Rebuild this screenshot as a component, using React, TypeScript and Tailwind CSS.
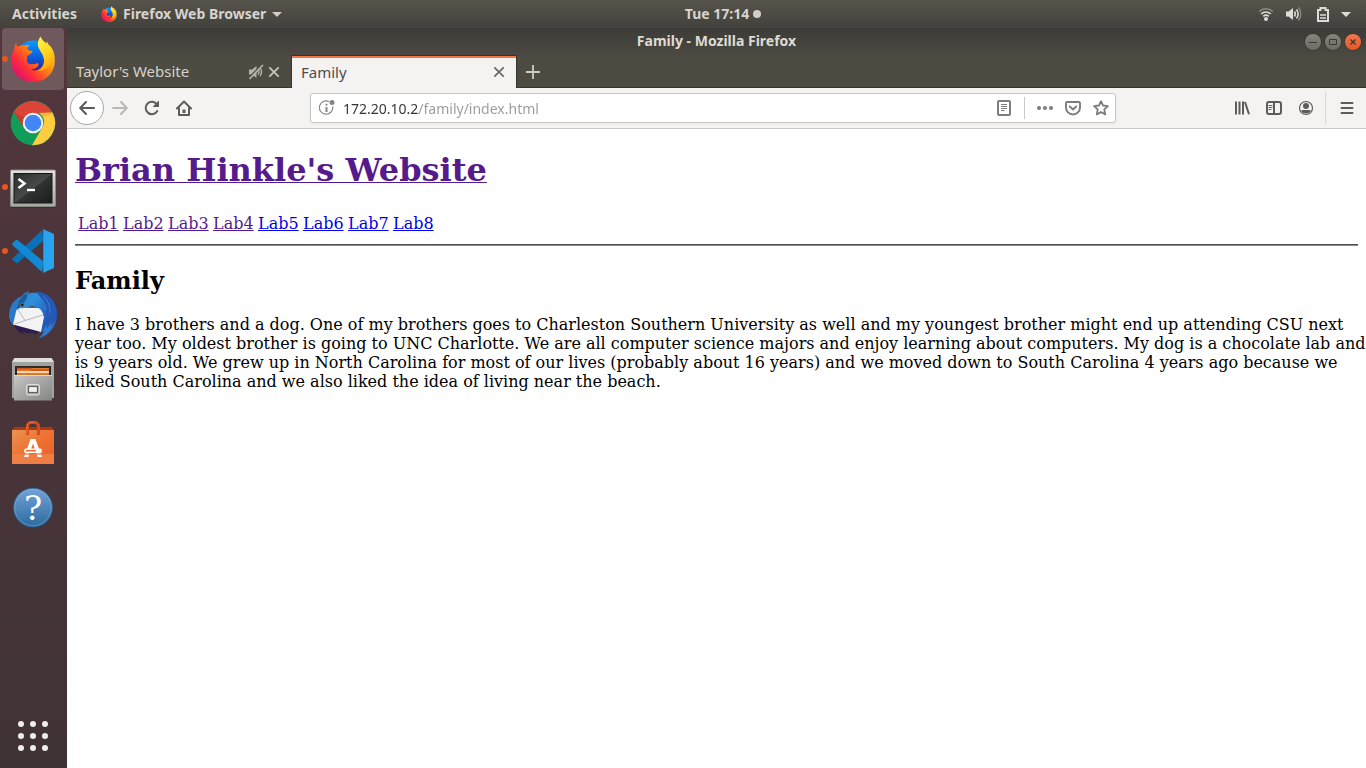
import type { ReactNode } from "react";

function FirefoxIcon({ className, id }: { className: string; id: string }) {
  return (
    <svg className={className} viewBox="0 0 46 46" aria-hidden="true">
      <defs>
        <linearGradient id={`${id}-body`} x1="0.1" y1="0.9" x2="0.95" y2="0.2">
          <stop offset="0" stopColor="#d3107a" />
          <stop offset="0.3" stopColor="#ff2b3d" />
          <stop offset="0.6" stopColor="#ff7a12" />
          <stop offset="1" stopColor="#ffd322" />
        </linearGradient>
        <linearGradient id={`${id}-globe`} x1="0.5" y1="0" x2="0.5" y2="1">
          <stop offset="0" stopColor="#0a9bff" />
          <stop offset="0.5" stopColor="#0a5fe0" />
          <stop offset="1" stopColor="#3b1780" />
        </linearGradient>
        <linearGradient id={`${id}-flame`} x1="0.3" y1="0" x2="0.7" y2="1">
          <stop offset="0" stopColor="#fff24a" />
          <stop offset="0.5" stopColor="#ffd21c" />
          <stop offset="1" stopColor="#ff9a0c" />
        </linearGradient>
      </defs>
      <circle cx="23" cy="21" r="16.500" fill={`url(#${id}-globe)`} />
      <path
        d="M6.300 6.500C6.100 8.500 7 10 7.500 11c2-1.600 4.500-2 6.500-1.500 2.500-.8 4.500-.6 6.200-.2-2.200 1-3 2.400-2.900 3.900 1.300 1.300 4.500 1.500 5.200 2.500-.5 2-3.800 2.600-5.600 4.800.2 1.500.4 3.200-.2 4.300 1.200 4 4.500 3.500 7.300 3.300 2.500-.4 4-1.700 4.600-.2-.4 3-3.600 5.300-7.600 5.300 4 3.200 11.500-.3 13.400-6.900C36 20.500 34.500 12 31 7c8 1.500 13.800 8.500 13.800 18C44.800 37 35.500 46 23.200 46 10.500 46 1 37 1 25c0-4.500 1.200-8.500 3.300-12 .1-2.500.8-5 2-6.500z"
        fill={`url(#${id}-body)`}
      />
      <path
        d="M30.500 0.500C27.500 5 27 9 29.200 13c2.200 4 5.300 7.300 4.800 13-.3 4-2.600 7-5.500 9C38 34 43 28 44.600 20.500 44 15 42 11 38.500 8.500L37 5.300l-.5 2.200C34 5.500 31.600 3.500 30.500.5z"
        fill={`url(#${id}-flame)`}
      />
    </svg>
  );
}

function ChromeIcon() {
  return (
    <svg className="size-[46px]" viewBox="0 0 46 46" aria-hidden="true">
      <circle cx="23" cy="23" r="22.300" fill="#109d58" />
      <path d="M3.700 11.900A22.300 22.300 0 0 1 42.300 13H23a10.200 10.200 0 0 0-9.200 14.500z" fill="#db4437" />
      <path d="M42.400 12.500A22.300 22.300 0 0 1 22 45.300l9.900-17A10.300 10.300 0 0 0 29 13z" fill="#ffcd40" />
      <path d="M14 17.500 12.500 26 3.700 11.900z" fill="#a8392f" opacity=".5" />
      <path d="m29 13 13.400-.5.7 1.500-11 3z" fill="#d9a52c" opacity=".45" />
      <circle cx="23" cy="23" r="10.300" fill="#f4f4f4" />
      <circle cx="23" cy="23" r="8.300" fill="#4285f4" />
    </svg>
  );
}

function TerminalIcon() {
  return (
    <svg className="mt-1 h-[40px] w-[46px]" viewBox="0 0 46 40" aria-hidden="true">
      <defs>
        <linearGradient id="term-frame" x2="0" y2="1">
          <stop offset="0" stopColor="#e4e4e2" />
          <stop offset="1" stopColor="#a5a5a2" />
        </linearGradient>
        <linearGradient id="term-screen" x2="1" y2="1">
          <stop offset="0" stopColor="#2c302d" />
          <stop offset="0.500" stopColor="#474a48" />
          <stop offset="0.520" stopColor="#303332" />
          <stop offset="1" stopColor="#1b1d1c" />
        </linearGradient>
      </defs>
      <rect x="0.500" y="2" width="45" height="37" rx="1" fill="#2b1f22" opacity=".5" />
      <rect x="0.500" y="1" width="45" height="36.500" rx="1" fill="url(#term-frame)" stroke="#898986" />
      <rect x="4" y="4.500" width="38" height="29.500" fill="url(#term-screen)" stroke="#151716" />
      <path d="m8.500 10 6 4.500-6 4.500" fill="none" stroke="#fff" strokeWidth="2.500" />
      <path d="M17 21h8" stroke="#fff" strokeWidth="2.300" />
    </svg>
  );
}

function CodeIcon() {
  return (
    <svg className="size-[44px]" viewBox="0 0 44 44" aria-hidden="true">
      <path d="M1.500 29.500 31 1l1.500 10.500L7 33.800c-.8.600-1.500.500-2.200 0l-3.200-2.700c-.500-.500-.600-1.100-.100-1.600z" fill="#0a70b8" />
      <path d="m1.500 14.200 3.200-2.900c.7-.6 1.400-.6 2.200 0L32.500 32.500 31 43 1.500 16c-.5-.6-.5-1.200 0-1.800z" fill="#1289d3" />
      <path d="M31 1c.6-.6 1.200-.7 2-.4L41.800 4.500c.8.400 1.200.9 1.200 1.800v31.400c0 .9-.4 1.400-1.200 1.800L33 43.400c-.8.300-1.400.2-2-.4.800.4 1.500 0 1.500-1V2c0-1-.7-1.400-1.500-1z" fill="#2aa5ee" />
      <path d="M32.500 1v42l9.600-4c.6-.3.900-.7.900-1.400V6.400c0-.7-.3-1.100-.9-1.400z" fill="#28a3ed" />
    </svg>
  );
}

function MailIcon() {
  return (
    <svg className="size-[48px]" viewBox="0 0 48 48" aria-hidden="true">
      <defs>
        <linearGradient id="mail-wing" x1="0" y1="0" x2="1" y2="0.800">
          <stop offset="0" stopColor="#2c84c8" />
          <stop offset="0.450" stopColor="#2f8fdc" />
          <stop offset="1" stopColor="#2054b4" />
        </linearGradient>
      </defs>
      <path d="M27 .8C39 1 48 11 48 23.500c0 12-7 20.500-18 23.500 3-2 4.500-4 5-7L22 34z" fill="#2358b8" />
      <path d="M4 31.500 31 40l-4 3-5-1.500-4 1-4-3 1 3.500C9 41 6 37 4 31.500z" fill="#2b1d4d" />
      <path d="M13 5C5 8 0 15 0 24.500c0 4 1.500 7 4.500 9.500L9 19z" fill="#2a78c8" />
      <path d="m8 16.500 25 .5 2 9-3 15L4 33.500z" fill="#f3f3f3" />
      <path d="m8 17 8 12.500L34 24M16 29.500 5.500 33" fill="none" stroke="#b4b7bc" />
      <path d="M20.500 0 18 3C25 0 35 2 39 9c4 6 4 14 0 22l-4 3c1-6 0-11-3-15-3-3.500-7-4.500-11-3.500-3.500.8-6.500 2.200-9.500 1.500L7 19c1-2 1.500-4.500 2.500-7C11.500 6 15 1.500 20.500 0z" fill="url(#mail-wing)" />
      <path d="M9.500 12c1.500-4.500 4-8 8.500-9.500 1 3-.5 6-2.500 8.500-2.500 3-4.500 5-8.500 8 1-2 1.500-4.500 2.500-7z" fill="#1b5c9a" />
      <path d="M27 1c13 0 21 10 21 22.500l-1.500 6.500-.5-4-2 7-.5-4-3 7-.5-4-6 6c3-8 4.500-15 2-22C33.500 9 31 5 27 1z" fill="#2358b4" />
      <path d="M46.500 29C44 39 38 45 29 47.500c3-2 5-4.500 6-8l-5 3c5-4 6-6 7.500-9l.5 4 4-6 .5 4z" fill="#3478c8" />
      <path d="M29 5c5 3 7.500 8 8 14M34 5c5 4 7 9 7 17" fill="none" stroke="#43a0e4" strokeWidth="1" opacity=".6" />
      <circle cx="13.300" cy="14" r="1.800" fill="#15233a" stroke="#8d7450" strokeWidth=".8" />
    </svg>
  );
}

function FilesIcon() {
  return (
    <svg className="mt-0.5 h-[46px] w-[44px]" viewBox="0 0 44 46" aria-hidden="true">
      <defs>
        <linearGradient id="drawer" x2="1" y2="1">
          <stop offset="0" stopColor="#c6c6c4" />
          <stop offset="1" stopColor="#858583" />
        </linearGradient>
      </defs>
      <path d="M3.500 1h37L43 5v36H1V5z" fill="#a2a2a0" />
      <path d="M3.500 1h37L43 5H1z" fill="#dededc" />
      <path d="M4 9h36v9H4z" fill="#2b2826" />
      <path d="M6 11h32v8H6z" fill="#d97a28" />
      <path d="M6 11.500h13l2 1.500h17" fill="none" stroke="#d0501c" strokeWidth="1.500" />
      <path d="M6 15h32" stroke="#fff3df" strokeWidth="1.500" />
      <path d="M3 18h38v25.500H3z" fill="url(#drawer)" />
      <path d="M3 18.500h38" stroke="#deded9" />
      <rect x="15.500" y="27.500" width="13" height="10.500" rx="1.500" fill="#b4b4b2" stroke="#dededc" />
      <rect x="17.500" y="29.500" width="9" height="6" fill="#f1f1ef" stroke="#60605e" strokeWidth="1.200" />
    </svg>
  );
}

function SoftwareIcon() {
  return (
    <svg className="h-[44px] w-[42px]" viewBox="0 0 42 44" aria-hidden="true">
      <defs>
        <linearGradient id="bag" x2="1" y2="1">
          <stop offset="0" stopColor="#e99350" />
          <stop offset="0.500" stopColor="#ee7133" />
          <stop offset="1" stopColor="#e96028" />
        </linearGradient>
      </defs>
      <path d="M2 6h38l2 3.500H0z" fill="#ab3814" />
      <path d="M0 9h42v34H0z" fill="url(#bag)" />
      <path d="M0 33h42v10H0z" fill="#f0834b" opacity=".8" />
      <path d="M15.500 14V5.500a4 4 0 0 1 4-4h3a4 4 0 0 1 4 4V14" fill="none" stroke="#d64a1c" strokeWidth="3.200" />
      <path d="M15 13V5.500A4.500 4.500 0 0 1 19.500 1h3" fill="none" stroke="#ec7043" />
      <path d="M18.600 18h4.800l6.600 18h-4.300L21 22.500 16.300 36H12z" fill="#fff" />
      <path d="M10 33h22" stroke="#ee7133" strokeWidth="1.200" />
      <rect x="12" y="27.500" width="18" height="4.500" rx="2" fill="#fff" />
      <path d="M14 29.700h10" stroke="#ee6a2c" strokeWidth="1.500" />
    </svg>
  );
}

function HelpIcon() {
  return (
    <svg className="mt-0.5 size-[42px]" viewBox="0 0 42 42" aria-hidden="true">
      <defs>
        <linearGradient id="help-disc" x2="0" y2="1">
          <stop offset="0" stopColor="#75a2d9" />
          <stop offset="1" stopColor="#2c6b9d" />
        </linearGradient>
      </defs>
      <circle cx="21" cy="21.500" r="20" fill="#26485f" opacity=".6" />
      <circle cx="21" cy="20.500" r="19.300" fill="url(#help-disc)" stroke="#2c649a" />
      <circle cx="21" cy="20.500" r="18.300" fill="none" stroke="#8cb7e3" opacity=".5" />
      <text x="21" y="33" textAnchor="middle" className="fill-white font-['DejaVu_Serif'] text-[34px]">?</text>
    </svg>
  );
}

function DockItem({ label, active, running, children }: { label: string; active?: boolean; running?: boolean; children: ReactNode }) {
  return (
    <button
      type="button"
      aria-label={label}
      className={`relative flex size-[62px] items-center justify-center rounded ${active ? "bg-[#6f595d]" : ""}`}
    >
      {running && <span className="absolute top-[28px] left-0 size-[6px] rounded-full bg-[#e95420]" />}
      {children}
    </button>
  );
}

function Dock() {
  return (
    <nav aria-label="Dock" className="flex w-[67px] shrink-0 flex-col gap-0.5 bg-linear-to-b from-[#52373d] to-[#3f3235] pl-0.5">
      <DockItem label="Firefox Web Browser" active running>
        <FirefoxIcon id="dock-ff" className="size-[46px]" />
      </DockItem>
      <DockItem label="Google Chrome"><ChromeIcon /></DockItem>
      <DockItem label="Terminal" running><TerminalIcon /></DockItem>
      <DockItem label="Visual Studio Code" running><CodeIcon /></DockItem>
      <DockItem label="Thunderbird Mail"><MailIcon /></DockItem>
      <DockItem label="Files"><FilesIcon /></DockItem>
      <DockItem label="Ubuntu Software"><SoftwareIcon /></DockItem>
      <DockItem label="Help"><HelpIcon /></DockItem>
      <button type="button" aria-label="Show Applications" className="mt-auto mb-px flex size-[62px] items-center justify-center">
        <span className="grid grid-cols-3 gap-1.5">
          {[0, 1, 2, 3, 4, 5, 6, 7, 8].map((n) => (
            <span key={n} className="size-1.5 rounded-full bg-[#eeeeec]" />
          ))}
        </span>
      </button>
    </nav>
  );
}

function SystemBar() {
  return (
    <header className="flex h-7 shrink-0 items-center bg-linear-to-b from-[#57544b] to-[#42413c] text-sm font-bold text-[#d6d4ce]">
      <div className="flex flex-1 items-center pl-3">
        <button type="button">Activities</button>
        <button type="button" className="ml-6 flex items-center">
          <FirefoxIcon id="bar-ff" className="mr-1.5 size-4" />
          Firefox Web Browser
          <svg className="ml-1.5 h-[5px] w-[10px]" viewBox="0 0 10 5" aria-hidden="true">
            <path d="M0 0h10L5 5z" fill="#d0cec8" />
          </svg>
        </button>
      </div>
      <button type="button" className="flex items-center gap-1 pl-17">
        Tue 17:14
        <span className="size-2 rounded-full bg-[#d0cec8]" />
      </button>
      <div className="flex flex-1 justify-end">
        <button type="button" aria-label="System menu" className="flex items-center pr-[15px]">
          <svg className="h-4 w-4" viewBox="0 0 16 16" fill="none" stroke="#dedcd8" strokeWidth="1.600" aria-hidden="true">
            <path d="M1.200 5.600a9.500 9.500 0 0 1 13.600 0" opacity=".4" />
            <path d="M3.200 8a6.800 6.800 0 0 1 9.600 0M5.300 10.300a4 4 0 0 1 5.400 0" />
            <circle cx="8" cy="13" r="2" fill="#dedcd8" stroke="none" />
          </svg>
          <svg className="ml-3 h-4 w-4" viewBox="0 0 16 16" fill="none" stroke="#dedcd8" strokeWidth="1.500" aria-hidden="true">
            <path d="M0 5.500h2.500L7 2v12l-4.500-3.500H0z" fill="#dedcd8" stroke="none" />
            <path d="M8.500 5.500a4.500 4.500 0 0 1 0 5M10.500 3.500a7.500 7.500 0 0 1 0 9" />
            <path d="M12.500 1.500a10.500 10.500 0 0 1 0 13" opacity=".4" />
          </svg>
          <svg className="ml-[13px] h-4 w-4" viewBox="0 0 16 16" fill="none" stroke="#dedcd8" strokeWidth="2" aria-hidden="true">
            <path d="M3 15V4h2.500V2h5v2H13v11z" />
            <path d="M5 9h6M5 12h6" strokeWidth="1.500" />
          </svg>
          <svg className="ml-[10px] h-[5px] w-[10px]" viewBox="0 0 10 5" aria-hidden="true">
            <path d="M0 0h10L5 5z" fill="#dedcd8" />
          </svg>
        </button>
      </div>
    </header>
  );
}

function WindowButton({ label, close, children }: { label: string; close?: boolean; children: ReactNode }) {
  return (
    <button
      type="button"
      aria-label={label}
      className={`flex size-4 items-center justify-center rounded-full shadow-[0_0_0_1px_#3a3934] ${
        close ? "bg-linear-to-b from-[#f2774f] to-[#e6561f]" : "bg-linear-to-b from-[#86847c] to-[#6d6b64]"
      }`}
    >
      <svg className="size-4" viewBox="0 0 16 16" fill="none" stroke="#3a3934" aria-hidden="true">{children}</svg>
    </button>
  );
}

function TitleBar() {
  return (
    <div className="grid h-7 grid-cols-[1fr_auto_1fr] items-center bg-linear-to-b from-[#3c3b37] to-[#4b4942]">
      <span />
      <h1 className="pb-0.5 text-sm leading-5 font-bold text-[#dfdbd2]">Family - Mozilla Firefox</h1>
      <div className="flex justify-end gap-1 pr-[5px]">
        <WindowButton label="Minimize"><path d="M4 8.500h8" /></WindowButton>
        <WindowButton label="Maximize"><path d="M4.500 5.500h7v5h-7z" /></WindowButton>
        <WindowButton label="Close" close><path d="m5.500 5.500 5 5m0-5-5 5" strokeWidth="1.400" /></WindowButton>
      </div>
    </div>
  );
}

function CloseGlyph() {
  return (
    <svg className="size-3" viewBox="0 0 12 12" fill="none" stroke="currentColor" strokeWidth="1.700" aria-hidden="true">
      <path d="m1.300 1.300 9.400 9.400m0-9.400-9.400 9.400" />
    </svg>
  );
}

function TabStrip() {
  return (
    <div role="tablist" className="flex h-8 bg-[#4e4b43] text-[15px]">
      <div className="flex w-[224px] items-center border-b border-[#353430] pr-[11px] pl-[9px] text-[#d6d3cb]">
        <button type="button" role="tab" aria-selected="false" className="flex-1 text-left">Taylor's Website</button>
        <button type="button" aria-label="Unmute tab" className="mr-1">
          <svg className="size-4" viewBox="0 0 16 16" fill="none" stroke="#b5b2a9" strokeWidth="1.400" aria-hidden="true">
            <path d="M1 5.500h3L8.500 2v12L4 10.500H1z" fill="#b5b2a9" stroke="none" />
            <path d="M10 5.500a4 4 0 0 1 0 5M12 4a6.500 6.500 0 0 1 0 8" />
            <path d="M14 .5.500 14" stroke="#4e4b43" strokeWidth="1.500" />
            <path d="M15 1 1.500 15" strokeWidth="1.700" />
          </svg>
        </button>
        <button type="button" aria-label="Close tab" className="text-[#c9c6be]"><CloseGlyph /></button>
      </div>
      <div className="-mt-px flex w-[226px] items-center border-x border-t border-[#353430] bg-[#f4f3f2] pr-[11px] pl-[9px] text-[#4c4c4c] shadow-[inset_0_2px_0_#f07746]">
        <button type="button" role="tab" aria-selected="true" className="flex-1 text-left">Family</button>
        <button type="button" aria-label="Close tab" className="text-[#686868]"><CloseGlyph /></button>
      </div>
      <div className="flex flex-1 items-center border-b border-[#353430] pl-2">
        <button type="button" aria-label="New tab">
          <svg className="size-4" viewBox="0 0 16 16" stroke="#d0cdc5" strokeWidth="1.800" aria-hidden="true">
            <path d="M8 1v14M1 8h14" />
          </svg>
        </button>
      </div>
    </div>
  );
}

function ToolButton({ label, className = "text-[#5c5c5c]", children }: { label: string; className?: string; children: ReactNode }) {
  return (
    <button type="button" aria-label={label} className={`flex h-8 w-8 shrink-0 items-center justify-center ${className}`}>
      <svg className="size-4" viewBox="0 0 16 16" fill="none" stroke="currentColor" strokeWidth="2" strokeLinecap="round" strokeLinejoin="round" aria-hidden="true">
        {children}
      </svg>
    </button>
  );
}

function AddressBar() {
  return (
    <div className="mx-[110px] flex h-[30px] flex-1 items-center rounded-[3px] border border-[#c8c7c5] bg-white pl-2 text-sm shadow-[0_1px_3px_rgba(0,0,0,0.05)]">
      <button type="button" aria-label="Site information">
        <svg className="size-4" viewBox="0 0 16 16" fill="none" stroke="#858585" strokeWidth="1.200" aria-hidden="true">
          <path d="M10 1.500A6.700 6.700 0 1 0 13.700 6.500" />
          <path d="M7.500 7v5" strokeWidth="2" />
          <path d="M7.500 3.800v1.700" strokeWidth="2" />
          <circle cx="13" cy="2.600" r="2.500" fill="#858585" stroke="none" />
        </svg>
      </button>
      <input
        type="text"
        aria-label="Search or enter address"
        defaultValue="172.20.10.2/family/index.html"
        className="ml-2 min-w-0 flex-1 bg-[linear-gradient(90deg,#333_76px,#9a9a9a_76px)] bg-clip-text pt-0.5 text-transparent caret-black outline-none"
      />
      <ToolButton label="Toggle reader view" className="text-[#7c7c7c]">
        <rect x="2" y="1" width="12" height="14" rx="1" />
        <path d="M5 4.500h6M5 6.500h6M5 8.500h6M5 10.500h3.500" strokeWidth="1" strokeLinecap="butt" />
      </ToolButton>
      <span className="mx-1 h-[22px] w-px bg-[#c9c9c9]" />
      <div className="flex gap-3 pr-1.5 pl-2">
        <button type="button" aria-label="Page actions">
          <svg className="size-4" viewBox="0 0 16 16" fill="#7c7c7c" aria-hidden="true">
            <circle cx="2" cy="8" r="2" />
            <circle cx="8" cy="8" r="2" />
            <circle cx="14" cy="8" r="2" />
          </svg>
        </button>
        <button type="button" aria-label="Save to Pocket">
          <svg className="size-4" viewBox="0 0 16 16" fill="none" stroke="#7c7c7c" strokeWidth="1.900" strokeLinecap="round" strokeLinejoin="round" aria-hidden="true">
            <path d="M1 3.200c0-.7.500-1.200 1.200-1.200h11.600c.7 0 1.200.5 1.200 1.200V7.500a7 7 0 0 1-14 0z" />
            <path d="M4.800 6.500 8 9.500l3.200-3" />
          </svg>
        </button>
        <button type="button" aria-label="Bookmark this page">
          <svg className="size-4" viewBox="0 0 16 16" fill="none" stroke="#7c7c7c" strokeWidth="1.800" strokeLinejoin="round" aria-hidden="true">
            <path d="m8 1.200 2 4.300 4.900.6-3.600 3.300.9 5L8 12l-4.200 2.400.9-5L1.100 6.100 6 5.500z" />
          </svg>
        </button>
      </div>
    </div>
  );
}

function NavBar() {
  return (
    <div className="flex h-[41px] items-center border-b border-[#c9c8c6] bg-[#f4f3f2] px-[3px]">
      <button type="button" aria-label="Go back" className="flex size-[34px] shrink-0 items-center justify-center rounded-full border border-[#a8a8a8] bg-white text-[#5c5c5c]">
        <svg className="size-4" viewBox="0 0 16 16" fill="none" stroke="currentColor" strokeWidth="2" strokeLinecap="round" strokeLinejoin="round" aria-hidden="true">
          <path d="M15 8H1.500M7 2 1.200 8 7 14" />
        </svg>
      </button>
      <ToolButton label="Go forward" className="text-[#b9b9b9]"><path d="M1 8h13.500M9 2l5.800 6L9 14" /></ToolButton>
      <ToolButton label="Reload">
        <path d="M13.300 11A6.200 6.200 0 1 1 13 4.500" />
        <path d="M14.500 1.500V6.500H9.800z" fill="currentColor" strokeWidth="1" />
      </ToolButton>
      <ToolButton label="Home">
        <path d="M1 8.500 8 1.500l7 7" />
        <path d="M3 8v7h10V8" />
        <path d="M8 9.500V13" strokeWidth="3" strokeLinecap="butt" />
      </ToolButton>
      <AddressBar />
      <ToolButton label="Library">
        <path d="M2 1.500v13M5.500 1.500v13M9 1.500v13M11 2l4 12.300" strokeLinecap="butt" />
      </ToolButton>
      <ToolButton label="Sidebars">
        <rect x="1" y="2" width="14" height="12" rx="2" />
        <path d="M8 2v12" />
        <path d="M3 5.500h3M3 7.500h3M3 9.500h2" strokeWidth="1" />
      </ToolButton>
      <ToolButton label="Account">
        <circle cx="8" cy="8" r="6.500" strokeWidth="1.200" />
        <circle cx="8" cy="6" r="3" fill="currentColor" stroke="none" />
        <path d="M3.300 11.200c0-1 .8-1.200 2-1.200h5.400c1.200 0 2 .200 2 1.200A6 6 0 0 1 8 13.500a6 6 0 0 1-4.700-2.300z" fill="currentColor" stroke="none" />
      </ToolButton>
      <span className="mr-[5px] ml-[3px] h-[34px] w-px bg-[#dcdad8]" />
      <ToolButton label="Open menu">
        <path d="M2.500 3h11M2.500 8h11M2.500 13h11" />
      </ToolButton>
    </div>
  );
}

const labs = [
  { name: "Lab1", visited: true },
  { name: "Lab2", visited: true },
  { name: "Lab3", visited: true },
  { name: "Lab4", visited: true },
  { name: "Lab5", visited: false },
  { name: "Lab6", visited: false },
  { name: "Lab7", visited: false },
  { name: "Lab8", visited: false },
];

function WebPage() {
  return (
    <main className="flex-1 bg-white pt-[22px] pl-2 font-['DejaVu_Serif',serif] text-base leading-[19px] text-black">
      <h1 className="text-[32px] leading-[38px] font-bold">
        <a href="#home" className="text-[#551a8b] underline decoration-1">Brian Hinkle's Website</a>
      </h1>
      <nav aria-label="Labs" className="mt-[25px] flex flex-wrap px-[3px]">
        {labs.map((lab) => (
          <span key={lab.name} className="w-[45px]">
            <a href={`#${lab.name}`} className={`underline ${lab.visited ? "text-[#551a8b]" : "text-[#0000ee]"}`}>
              {lab.name}
            </a>
          </span>
        ))}
      </nav>
      <hr className="mt-[11px] mr-2 h-0.5 border-t border-b border-t-[#505050] border-b-[#8a8a8a]" />
      <h2 className="mt-[21px] text-2xl leading-7 font-bold">Family</h2>
      <p className="mt-5">
        I have 3 brothers and a dog. One of my brothers goes to Charleston Southern University as well and my youngest
        brother might end up attending CSU next year too. My oldest brother is going to UNC Charlotte. We are all
        computer science majors and enjoy learning about computers. My dog is a chocolate lab and is 9 years old. We
        grew up in North Carolina for most of our lives (probably about 16 years) and we moved down to South Carolina 4
        years ago because we liked South Carolina and we also liked the idea of living near the beach.
      </p>
    </main>
  );
}

export default function App() {
  return (
    <div className="flex min-h-screen flex-col font-['Noto_Sans',sans-serif]">
      <SystemBar />
      <div className="flex flex-1">
        <Dock />
        <div className="flex min-w-0 flex-1 flex-col">
          <TitleBar />
          <TabStrip />
          <NavBar />
          <WebPage />
        </div>
      </div>
    </div>
  );
}
